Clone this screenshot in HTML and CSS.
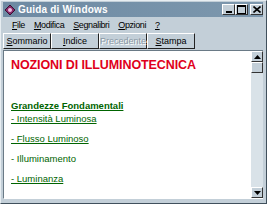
FILE: index.html
```html
<!DOCTYPE html>
<html>
<head>
<meta charset="utf-8">
<link rel="stylesheet" href="styles.css">
</head>
<body>
<div class="window">
  <div class="titlebar">
    <svg class="appicon" width="12" height="12" viewBox="0 0 12 12">
      <path d="M6 1 L11 6 L6 11 L1 6 Z" fill="#8a2a6a" stroke="#3a1030" stroke-width="1"/>
      <circle cx="6" cy="6" r="2" fill="#e8c0e0"/>
    </svg>
    <span class="title">Guida di Windows</span>
    <div class="winbtns">
      <span class="wbtn"><svg width="8" height="7" viewBox="0 0 8 7"><rect x="1" y="5" width="6" height="2" fill="#000"/></svg></span>
      <span class="wbtn"><svg width="9" height="9" viewBox="0 0 9 9"><rect x="0.5" y="0.5" width="8" height="8" fill="none" stroke="#000"/><rect x="0" y="0" width="9" height="2" fill="#000"/></svg></span>
      <span class="wbtn close"><svg width="8" height="7" viewBox="0 0 8 7"><path d="M0.5 0.5 L7.5 6.5 M7.5 0.5 L0.5 6.5" stroke="#000" stroke-width="1.6"/></svg></span>
    </div>
  </div>
  <div class="menubar">
    <span><u>F</u>ile</span>
    <span><u>M</u>odifica</span>
    <span><u>S</u>egnalibri</span>
    <span><u>O</u>pzioni</span>
    <span><u>?</u></span>
  </div>
  <div class="toolbar">
    <span class="tbtn"><u>S</u>ommario</span>
    <span class="tbtn"><u>I</u>ndice</span>
    <span class="tbtn disabled">Precedente</span>
    <span class="tbtn"><u>S</u>tampa</span>
  </div>
  <div class="content">
    <div class="page">
      <h1>NOZIONI DI ILLUMINOTECNICA</h1>
      <p class="sub">Grandezze Fondamentali</p>
      <p class="item first">- Intensità Luminosa</p>
      <p class="item">- Flusso Luminoso</p>
      <p class="item plain">- Illuminamento</p>
      <p class="item">- Luminanza</p>
    </div>
    <div class="scrollbar">
      <span class="sbtn up"><svg width="7" height="4" viewBox="0 0 7 4"><path d="M3.5 0 L7 4 L0 4 Z" fill="#000"/></svg></span>
      <span class="thumb"></span>
      <span class="track"></span>
      <span class="sbtn down"><svg width="7" height="4" viewBox="0 0 7 4"><path d="M0 0 L7 0 L3.5 4 Z" fill="#000"/></svg></span>
    </div>
  </div>
</div>
</body>
</html>
```
FILE: styles.css
```css
html, body { margin: 0; padding: 0; }
body { width: 267px; height: 204px; overflow: hidden; background: #c3cfd8; font-family: "Liberation Sans", Arial, sans-serif; font-size: 9px; }
.window { width: 267px; height: 204px; box-sizing: border-box; border-left: 1px solid #e8eef2; border-top: 1px solid #e8eef2; border-right: 1px solid #40505c; border-bottom: 1px solid #40505c; padding: 1px 3px 4px 2px; display: flex; flex-direction: column; background: #c3cfd8; }
.titlebar { height: 15px; flex: none; background: linear-gradient(90deg, #6e8aa3, #7d98ae); display: flex; align-items: center; padding: 0 0 0 1px; color: #fff; }
.appicon { flex: none; }
.title { font-weight: bold; margin-left: 2px; font-size: 10px; letter-spacing: 0.2px; }
.winbtns { margin-left: auto; display: flex; }
.wbtn { width: 11px; height: 9px; background: #c3cfd8; border-top: 1px solid #fff; border-left: 1px solid #fff; border-right: 1px solid #333; border-bottom: 1px solid #333; display: flex; align-items: center; justify-content: center; }
.wbtn.close { margin-left: 2px; }
.menubar { height: 15px; flex: none; display: flex; gap: 9px; padding: 0 0 0 9px; align-items: center; color: #000; font-size: 9px; letter-spacing: -0.4px; }
.toolbar { display: flex; padding: 1px 0 1px 0; gap: 0; flex: none; }
.tbtn { width: 46px; height: 14px; border-top: 1px solid #fff; border-left: 1px solid #fff; border-right: 1px solid #222; border-bottom: 1px solid #222; display: flex; align-items: center; justify-content: center; color: #000; font-size: 9px; }
.tbtn.disabled { color: #8a98a4; text-shadow: 1px 1px 0 #fff; }
.content { flex: 1; display: flex; border-top: 1px solid #6a7a86; border-left: 1px solid #6a7a86; border-bottom: 1px solid #fff; background: #fff; min-height: 0; }
.page { flex: 1; padding: 6px 0 0 7px; overflow: hidden; }
h1 { margin: 0; color: #e0001b; font-size: 12.5px; line-height: 16px; font-weight: bold; letter-spacing: -0.1px; }
.sub { margin: 27px 0 0 0; color: #006400; font-weight: bold; text-decoration: underline; font-size: 9.5px; line-height: 12px; }
.item { margin: 9px 0 0 0; color: #006400; text-decoration: underline; font-size: 9.5px; line-height: 11px; }
.item.first { margin-top: 1px; }
.item.plain { text-decoration: none; }
.scrollbar { width: 12px; display: flex; flex-direction: column; background: #d9e2e8; }
.sbtn { height: 9px; background: #c3cfd8; border-top: 1px solid #fff; border-left: 1px solid #fff; border-right: 1px solid #333; border-bottom: 1px solid #333; display: flex; align-items: center; justify-content: center; flex: none; }
.thumb { height: 9px; background: #c3cfd8; border-top: 1px solid #fff; border-left: 1px solid #fff; border-right: 1px solid #333; border-bottom: 1px solid #333; flex: none; }
.track { flex: 1; }
```
